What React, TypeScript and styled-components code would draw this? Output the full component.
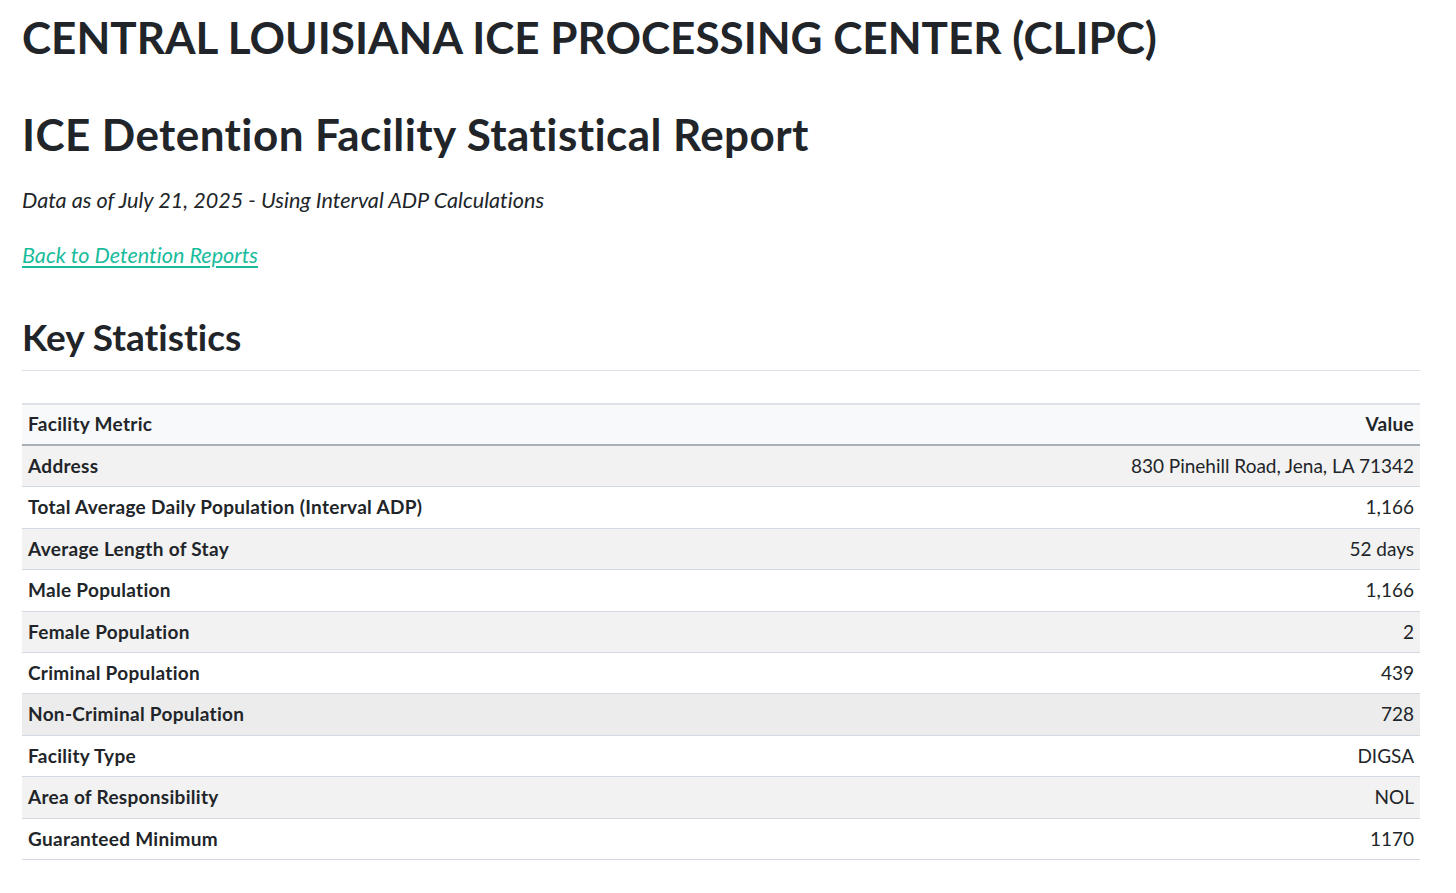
import React from 'react';
import styled, { createGlobalStyle } from 'styled-components';

type StatRow = {
  metric: string;
  value: string;
};

const stats: StatRow[] = [
  { metric: 'Address', value: '830 Pinehill Road, Jena, LA 71342' },
  { metric: 'Total Average Daily Population (Interval ADP)', value: '1,166' },
  { metric: 'Average Length of Stay', value: '52 days' },
  { metric: 'Male Population', value: '1,166' },
  { metric: 'Female Population', value: '2' },
  { metric: 'Criminal Population', value: '439' },
  { metric: 'Non-Criminal Population', value: '728' },
  { metric: 'Facility Type', value: 'DIGSA' },
  { metric: 'Area of Responsibility', value: 'NOL' },
  { metric: 'Guaranteed Minimum', value: '1170' },
];

// the row the pointer sits on in the screenshot
const HOVER_ROW = 6;

const GlobalStyle = createGlobalStyle`
  body {
    margin: 0;
    background: #fff;
    color: #212529;
    font-family: Lato, "Open Sans", "Liberation Sans", sans-serif;
    font-variant-ligatures: none;
  }
`;

const App: React.FC = () => {
  return (
    <>
      <GlobalStyle />
      <Page>
        <FacilityTitle>CENTRAL LOUISIANA ICE PROCESSING CENTER (CLIPC)</FacilityTitle>
        <ReportTitle>ICE Detention Facility Statistical Report</ReportTitle>
        <DataNote>Data as of July 21, 2025 - Using Interval ADP Calculations</DataNote>
        <BackLink href="#">Back to Detention Reports</BackLink>
        <SectionTitle>Key Statistics</SectionTitle>
        <StatsTable>
          <thead>
            <tr>
              <HeadCell>Facility Metric</HeadCell>
              <HeadCell $right>Value</HeadCell>
            </tr>
          </thead>
          <tbody>
            {stats.map((row, i) => (
              <BodyRow key={row.metric} $striped={i % 2 === 0} $hover={i === HOVER_ROW}>
                <MetricCell>{row.metric}</MetricCell>
                <ValueCell>{row.value}</ValueCell>
              </BodyRow>
            ))}
          </tbody>
        </StatsTable>
      </Page>
    </>
  );
};

const Page = styled.main`
  display: flex;
  flex-direction: column;
  align-items: flex-start;
  padding: 10px 36px 32px 22px;
`;
const FacilityTitle = styled.h1`
  margin: 0;
  font-size: 44px;
  line-height: 54px;
  font-weight: 700;
`;
const ReportTitle = styled.h2`
  margin: 44px 0 0;
  font-size: 44px;
  line-height: 52px;
  font-weight: 700;
  letter-spacing: 0.42px;
`;
const DataNote = styled.p`
  margin: 25px 0 0;
  font-size: 21.6px;
  line-height: 30px;
  font-style: italic;
`;
const BackLink = styled.a`
  margin-top: 25px;
  font-size: 21.6px;
  line-height: 30px;
  font-style: italic;
  color: #18bc9c;
  text-decoration: underline;
  text-underline-offset: 3px;
`;
const SectionTitle = styled.h3`
  align-self: stretch;
  margin: 45px 0 0;
  padding-bottom: 11px;
  border-bottom: 1px solid #dde0e8;
  font-size: 37px;
  line-height: 44px;
  font-weight: 700;
`;
const StatsTable = styled.table`
  width: 100%;
  margin-top: 32px;
  border-collapse: collapse;
  font-size: 19px;
`;
const HeadCell = styled.th<{ $right?: boolean }>`
  padding: 6px 6px 7px;
  line-height: 26px;
  text-align: ${(props) => (props.$right ? 'right' : 'left')};
  font-weight: 700;
  letter-spacing: 0.3px;
  background: #f8f9fa;
  border-top: 2px solid #dee2e6;
  border-bottom: 2px solid #a9b0b8;
`;
const BodyRow = styled.tr<{ $striped: boolean; $hover: boolean }>`
  background: ${(props) => (props.$hover ? '#ececec' : props.$striped ? '#f2f2f2' : '#fff')};
  border-bottom: 1px solid #d3d9e0;
`;
const MetricCell = styled.td`
  padding: 7px 6px;
  line-height: 26.4px;
  font-weight: 700;
  letter-spacing: 0.3px;
`;
const ValueCell = styled.td`
  padding: 7px 6px;
  line-height: 26.4px;
  text-align: right;
`;

export default App;
